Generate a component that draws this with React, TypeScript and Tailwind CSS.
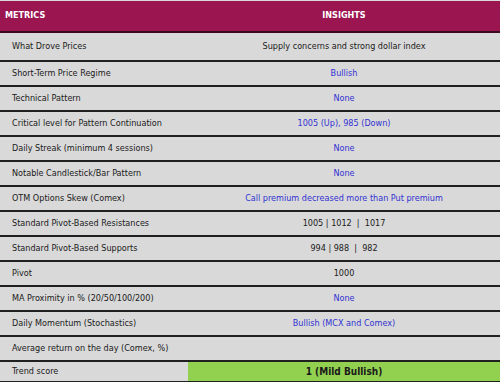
import React from 'react';

type Row = { metric: string; insight: string; blue?: boolean };

const rows: Row[] = [
  { metric: 'What Drove Prices', insight: 'Supply concerns and strong dollar index' },
  { metric: 'Short-Term Price Regime', insight: 'Bullish', blue: true },
  { metric: 'Technical Pattern', insight: 'None', blue: true },
  { metric: 'Critical level for Pattern Continuation', insight: '1005 (Up), 985 (Down)', blue: true },
  { metric: 'Daily Streak (minimum 4 sessions)', insight: 'None', blue: true },
  { metric: 'Notable Candlestick/Bar Pattern', insight: 'None', blue: true },
  { metric: 'OTM Options Skew (Comex)', insight: 'Call premium decreased more than Put premium', blue: true },
  { metric: 'Standard Pivot-Based Resistances', insight: '1005 | 1012  |  1017' },
  { metric: 'Standard Pivot-Based Supports', insight: '994 | 988  |  982' },
  { metric: 'Pivot', insight: '1000' },
  { metric: 'MA Proximity in % (20/50/100/200)', insight: 'None', blue: true },
  { metric: 'Daily Momentum (Stochastics)', insight: 'Bullish (MCX and Comex)', blue: true },
  { metric: 'Average return on the day (Comex, %)', insight: '' },
];

export default function App() {
  return (
    <div
      className="w-[500px] h-[382px] overflow-hidden bg-[#d9d9d9] text-[9px] text-[#1a1a1a] font-stretch-condensed"
      style={{ fontFamily: '"DejaVu Sans Condensed", "DejaVu Sans", sans-serif' }}
    >
      <div className="h-[32px] mt-px flex items-center bg-[#9b1551] border-b-2 border-[#3b0a20] font-bold text-white">
        <div className="w-[188px] pl-[5px]">METRICS</div>
        <div className="flex-1 text-center">INSIGHTS</div>
      </div>
      {rows.map((r, i) => (
        <div
          key={i}
          className={`flex items-center border-b-2 border-[#202020] ${i === 0 ? 'h-[29px]' : 'h-[25px]'}`}
        >
          <div className="w-[188px] pl-[12px] whitespace-nowrap">{r.metric}</div>
          <div className={`flex-1 text-center whitespace-pre ${r.blue ? 'text-[#3232d2]' : ''}`}>{r.insight}</div>
        </div>
      ))}
      <div className="flex h-[21px] border-b-2 border-[#202020]">
        <div className="w-[188px] pl-[12px] flex items-center">Trend score</div>
        <div className="flex-1 flex items-center justify-center bg-[#92d050] font-bold text-[10px]">1 (Mild Bullish)</div>
      </div>
    </div>
  );
}
